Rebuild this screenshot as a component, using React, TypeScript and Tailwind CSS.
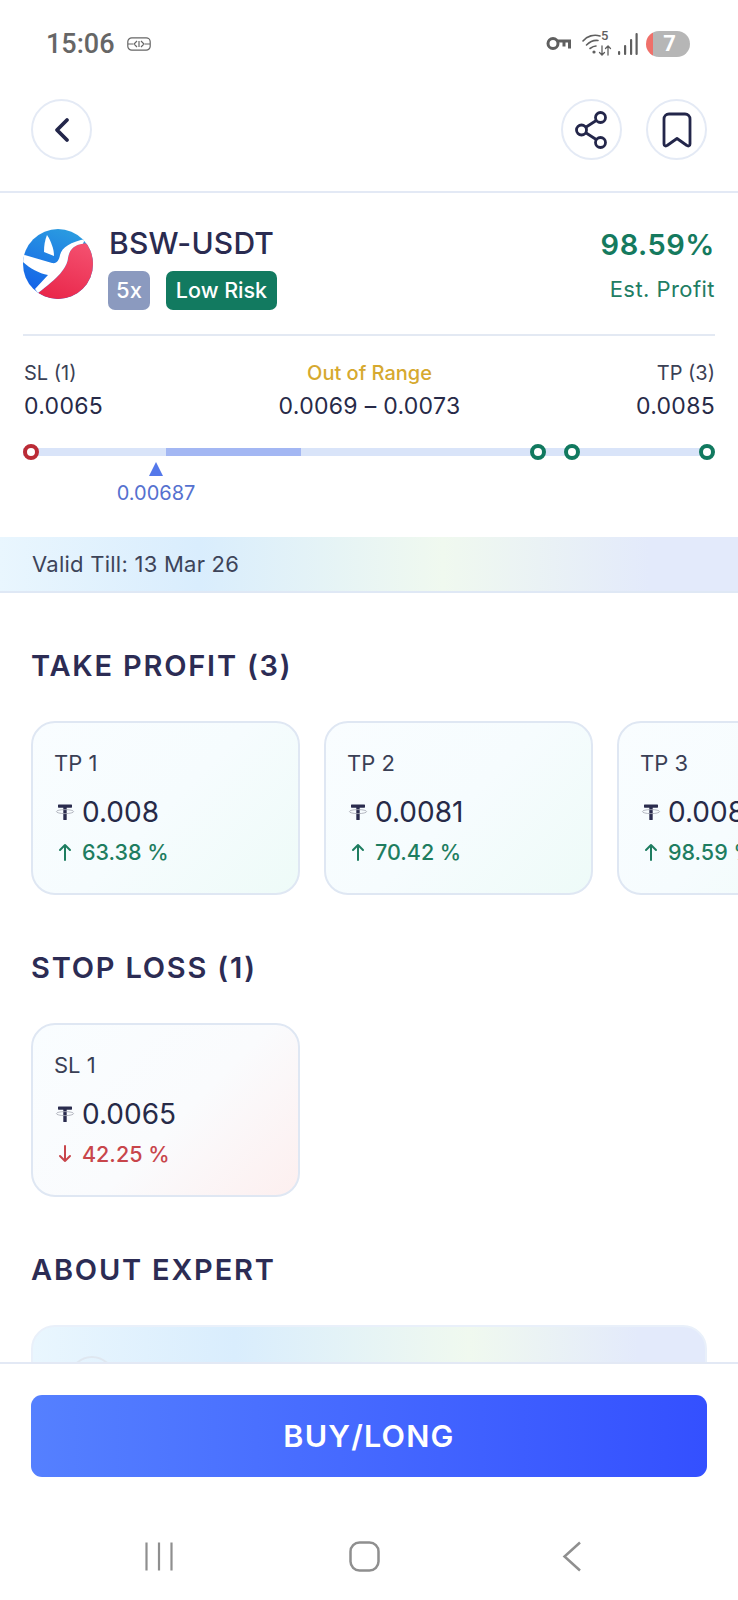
import React from "react";

const Tether = () => (
  <svg width="20" height="20" viewBox="0 0 20 20" className="shrink-0">
    <rect x="3" y="2.5" width="14" height="3.2" rx="0.6" fill="#2a2c4e" />
    <rect x="8.3" y="3" width="3.4" height="15" rx="0.6" fill="#2a2c4e" />
    <ellipse cx="10" cy="9.6" rx="8.6" ry="2" fill="none" stroke="#a4a7b3" strokeWidth="0.8" />
  </svg>
);

const Logo = () => (
  <svg width="70" height="70" viewBox="0 0 70 70" className="shrink-0">
    <defs>
      <linearGradient id="blueG" x1="0.6" y1="0" x2="0.2" y2="1">
        <stop offset="0" stopColor="#2a9be0" />
        <stop offset="1" stopColor="#125de9" />
      </linearGradient>
      <linearGradient id="redG" x1="0.7" y1="0" x2="0.3" y2="1">
        <stop offset="0" stopColor="#f4506f" />
        <stop offset="1" stopColor="#e9264a" />
      </linearGradient>
      <clipPath id="logoClip">
        <circle cx="35" cy="35" r="35" />
      </clipPath>
    </defs>
    <g clipPath="url(#logoClip)">
      <rect width="70" height="70" fill="url(#blueG)" />
      <path d="M60 14.5 C51 16 46.5 20 45 29 C44 39 35 49 15 64 L20 72 L75 72 L75 14 Z" fill="url(#redG)" />
      <path d="M-2 25 L29 34 C34 35 36 31 37 26 C39 18 48 13 62 10 L60 14.7 C51 16 46.5 20 45 29 C44 39 35 49 15 64 L12 60 L25 46 C15 44 5 38 -2 31 Z" fill="#fff" />
      <path d="M24 6 C28 12 31 20 31 27 L21 23 C21 16 22 11 24 6 Z" fill="#fff" />
    </g>
  </svg>
);

const CircleBtn = ({ children }: { children: React.ReactNode }) => (
  <div className="flex h-[61px] w-[61px] items-center justify-center rounded-full border-2 border-[#e4eaf5] bg-white">
    {children}
  </div>
);

const StatusBar = () => (
  <div className="flex h-[88px] shrink-0 items-center justify-between pl-[46px] pr-[48px] [font-family:Roboto,sans-serif]">
    <div className="flex items-center gap-[12px]">
      <span className="text-[27px] font-medium leading-none text-[#666666]">15:06</span>
      <svg width="24" height="14" viewBox="0 0 24 14" fill="none" stroke="#666" strokeWidth="1.2">
        <rect x="0.8" y="0.8" width="22.4" height="12.4" rx="4" />
        <path d="M1 7H6M18 7H23M10 4L7 7L10 10M14 4L17 7L14 10M12 4V10" />
      </svg>
    </div>
    <div className="flex items-center">
      <svg width="26" height="16" viewBox="0 0 26 16" fill="none" stroke="#5f5f5f" strokeWidth="3" className="mr-[10px]">
        <circle cx="7" cy="7.500" r="5" />
        <path d="M12 5H25M23.500 5V12.500M18 5V10.500" />
      </svg>
      <div className="relative mr-[6px] h-[26px] w-[30px]">
        <svg width="30" height="26" viewBox="0 0 30 26" fill="none" stroke="#5f5f5f" strokeWidth="1.6" strokeLinecap="round">
          <path d="M1 10C5 5 12 3 18 5" />
          <path d="M4.500 14C8 10.500 12 9 16 9.500" />
          <path d="M8 17.500C10 16 12 15 14 15" />
          <circle cx="12" cy="21" r="0.8" fill="#5f5f5f" />
          <path d="M20 15V24M17.500 21.500L20 24L22.500 21.500M26 24V15M23.500 17.500L26 15L28.500 17.500" strokeWidth="1.3" />
        </svg>
        <span className="absolute left-[19px] top-[-2px] text-[13px] font-medium leading-[14px] text-[#5f5f5f]">5</span>
      </div>
      <svg width="20" height="24" viewBox="0 0 20 24" fill="#5f5f5f" className="mr-[8px]">
        <rect x="0" y="19" width="2.200" height="4" rx="1" />
        <rect x="6" y="13" width="2.200" height="10" rx="1" />
        <rect x="12" y="7" width="2.200" height="16" rx="1" />
        <rect x="17.500" y="1" width="2.200" height="22" rx="1" />
      </svg>
      <div className="flex h-[26px] w-[44px] items-center justify-center overflow-hidden rounded-full bg-[linear-gradient(90deg,#ef706a_0%,#ef706a_16%,#b6b6b6_16%,#b6b6b6_100%)]">
        <span className="pl-[3px] text-[22px] font-bold leading-none text-white">7</span>
      </div>
    </div>
  </div>
);

const Header = () => (
  <div className="flex h-[105px] shrink-0 items-start justify-between border-b-2 border-[#e3e9f5] pl-[31px] pr-[31px] pt-[11px]">
    <CircleBtn>
      <svg width="18" height="26" viewBox="0 0 18 26" fill="none" stroke="#23264a" strokeWidth="3.800" strokeLinecap="round" strokeLinejoin="round">
        <path d="M14 3L4 13L14 23" />
      </svg>
    </CircleBtn>
    <div className="flex gap-[24px]">
      <CircleBtn>
        <svg width="36" height="40" viewBox="0 0 36 40" fill="none" stroke="#23264a" strokeWidth="2.800">
          <circle cx="26.500" cy="7.500" r="5" />
          <circle cx="7.500" cy="20" r="5" />
          <circle cx="26.500" cy="32.500" r="5" />
          <path d="M22.200 10.500L11.800 17.200M11.800 22.800L22.200 29.500" />
        </svg>
      </CircleBtn>
      <CircleBtn>
        <svg width="30" height="36" viewBox="0 0 30 36" fill="none" stroke="#23264a" strokeWidth="2.800" strokeLinejoin="round">
          <path d="M7 2H23C26 2 28 4 28 7V32C28 33.800 26.200 34.500 24.900 33.500L15 26.500L5.100 33.500C3.800 34.500 2 33.800 2 32V7C2 4 4 2 7 2Z" />
        </svg>
      </CircleBtn>
    </div>
  </div>
);

const Dot = ({ pos, color }: { pos: string; color: string }) => (
  <span className={`absolute top-[-4px] h-[16px] w-[16px] rounded-full border-[4px] bg-white ${pos} ${color}`} />
);

const Summary = () => (
  <div className="flex h-[344px] shrink-0 flex-col px-[23px] pt-[36px]">
    <div className="flex items-start justify-between">
      <div className="flex gap-[15px]">
        <Logo />
        <div className="flex flex-col">
          <span className="mt-[-5px] pl-[1px] text-[30px] font-medium leading-[38px] tracking-[0.2px] text-[#2a2b50]">BSW-USDT</span>
          <div className="mt-[9px] flex gap-[16px]">
            <span className="flex h-[39px] w-[42px] items-center justify-center rounded-[7px] bg-[#8b9abf] text-[22px] font-medium text-white">5x</span>
            <span className="flex h-[39px] w-[111px] items-center justify-center rounded-[7px] bg-[#127a60] text-[21.500px] font-medium text-white">Low Risk</span>
          </div>
        </div>
      </div>
      <div className="flex flex-col items-end">
        <span className="mt-[-3px] text-[29px] font-semibold leading-[38px] tracking-[0.5px] text-[#157a5e]">98.59%</span>
        <span className="mt-[9px] text-[22px] leading-[32px] tracking-[0.45px] text-[#217d63]">Est. Profit</span>
      </div>
    </div>
    <div className="mt-[24px] h-[2px] bg-[#e3e9f3]" />
    <div className="mt-[24px] flex items-start justify-between">
      <div className="flex flex-col">
        <span className="pl-[1px] text-[20px] leading-[26px] text-[#3b4155]">SL (1)</span>
        <span className="mt-[6px] pl-[1px] text-[23px] leading-[28px] tracking-[0.3px] text-[#272a48]">0.0065</span>
      </div>
      <div className="flex flex-col items-center">
        <span className="text-[20px] font-medium leading-[26px] text-[#d6a92f]">Out of Range</span>
        <span className="mt-[6px] text-[23px] leading-[28px] tracking-[0.3px] text-[#272a48]">0.0069 – 0.0073</span>
      </div>
      <div className="flex flex-col items-end">
        <span className="text-[20px] leading-[26px] text-[#3b4155]">TP (3)</span>
        <span className="mt-[6px] text-[23px] leading-[28px] tracking-[0.3px] text-[#272a48]">0.0085</span>
      </div>
    </div>
    <div className="relative mt-[28px] h-[8px] w-[684px] self-start bg-[#d9e4f9]">
      <div className="absolute left-[143px] top-0 h-[8px] w-[135px] bg-[#a3b7f3]" />
      <Dot pos="left-0" color="border-[#bb2b36]" />
      <Dot pos="left-[507px]" color="border-[#11795f]" />
      <Dot pos="left-[541px]" color="border-[#11795f]" />
      <Dot pos="left-[676px]" color="border-[#11795f]" />
      <div className="absolute left-[133px] top-[14px] flex w-[0px] flex-col items-center">
        <span className="h-0 w-0 border-x-[7px] border-b-[14px] border-x-transparent border-b-[#5478ea]" />
        <span className="mt-[5px] text-[20px] leading-[24px] text-[#5571cf]">0.00687</span>
      </div>
    </div>
  </div>
);

const PriceCard = ({ label, price, pct, up, tone }: { label: string; price: string; pct: string; up: boolean; tone: string }) => (
  <div className={`flex h-[174px] w-[269px] shrink-0 flex-col rounded-[24px] border-2 border-[#dfe7f3] pl-[21px] pt-[26px] ${tone}`}>
    <span className="text-[22px] leading-[28px] text-[#3a3f55]">{label}</span>
    <div className="mt-[19px] flex items-center gap-[7px] pl-[1px]">
      <Tether />
      <span className="text-[28px] leading-[32px] text-[#272a48]">{price}</span>
    </div>
    <div className={`mt-[10px] flex items-center gap-[7px] pl-[1px] text-[21.500px] font-medium leading-[28px] ${up ? "text-[#1e7d60]" : "text-[#c8454b]"}`}>
      <svg width="20" height="20" viewBox="0 0 20 20" fill="none" stroke="currentColor" strokeWidth="2" strokeLinecap="round" strokeLinejoin="round" className="shrink-0">
        {up ? <path d="M10 18V3M5 8L10 3L15 8" /> : <path d="M10 2V17M5 12L10 17L15 12" />}
      </svg>
      <span>{pct}</span>
    </div>
  </div>
);

const Heading = ({ children }: { children: React.ReactNode }) => (
  <div className="pl-[31px] text-[29px] font-semibold leading-[36px] tracking-[1.800px] text-[#2c2c54]">{children}</div>
);

const tpTone = "bg-[linear-gradient(135deg,#f9fdff_0%,#f6fcfe_50%,#eefbf8_100%)]";
const slTone = "bg-[linear-gradient(135deg,#f9fdff_0%,#fafbfd_55%,#fdefef_100%)]";

const Body = () => (
  <div className="min-h-0 flex-1 overflow-hidden">
    <div className="flex h-[56px] items-center border-b-2 border-[#dfe8f5] bg-[linear-gradient(90deg,#e9f6fe_0%,#d9edfd_27%,#f0f9ef_60%,#e3eafb_88%,#e3eafb_100%)] pl-[32px] text-[22px] tracking-[0.25px] text-[#3d4459]">
      Valid Till: 13 Mar 26
    </div>
    <div className="pt-[55px]">
      <Heading>TAKE PROFIT (3)</Heading>
      <div className="mt-[37px] flex gap-[24px] overflow-hidden pl-[31px]">
        <PriceCard label="TP 1" price="0.008" pct="63.38 %" up tone={tpTone} />
        <PriceCard label="TP 2" price="0.0081" pct="70.42 %" up tone={tpTone} />
        <PriceCard label="TP 3" price="0.0085" pct="98.59 %" up tone={tpTone} />
      </div>
    </div>
    <div className="pt-[55px]">
      <Heading>STOP LOSS (1)</Heading>
      <div className="mt-[37px] flex pl-[31px]">
        <PriceCard label="SL 1" price="0.0065" pct="42.25 %" up={false} tone={slTone} />
      </div>
    </div>
    <div className="pt-[55px]">
      <Heading>ABOUT EXPERT</Heading>
      <div className="mx-[31px] mt-[37px] h-[120px] rounded-[24px] border-2 border-[#e9f0fa] bg-[linear-gradient(90deg,#e9f6fe_0%,#d9edfd_30%,#f0f9ef_65%,#e3eafb_90%)] pl-[36px] pt-[29px]">
        <div className="h-[46px] w-[46px] rounded-full border-2 border-[#dfe7f0]" />
      </div>
    </div>
  </div>
);

const Bottom = () => (
  <div className="flex h-[238px] shrink-0 flex-col border-t-2 border-[#e3e9f5] bg-white">
    <div className="mx-[31px] mt-[31px] flex h-[82px] items-center justify-center rounded-[11px] bg-[linear-gradient(90deg,#5580ff_0%,#3450ff_100%)] text-[30.500px] font-semibold tracking-[1.200px] text-white">
      BUY/LONG
    </div>
    <div className="mt-[64px] flex items-center pl-[145px]">
      <svg width="28" height="29" viewBox="0 0 28 29" fill="none" stroke="#8f8f8f" strokeWidth="2.200">
        <path d="M1.500 0.500V28.500M14 0.500V28.500M26.500 0.500V28.500" />
      </svg>
      <svg width="31" height="31" viewBox="0 0 31 31" fill="none" stroke="#8f8f8f" strokeWidth="2.500" className="ml-[176px]">
        <rect x="1.500" y="1.500" width="28" height="28" rx="9" />
      </svg>
      <svg width="20" height="31" viewBox="0 0 20 31" fill="none" stroke="#8f8f8f" strokeWidth="2.500" className="ml-[182px]">
        <path d="M18 1.500L2.500 15.500L18 29.500" />
      </svg>
    </div>
  </div>
);

export default function App() {
  return (
    <div className="flex h-[1600px] w-[738px] flex-col overflow-hidden bg-white [font-family:Inter,sans-serif]">
      <StatusBar />
      <Header />
      <Summary />
      <Body />
      <Bottom />
    </div>
  );
}
